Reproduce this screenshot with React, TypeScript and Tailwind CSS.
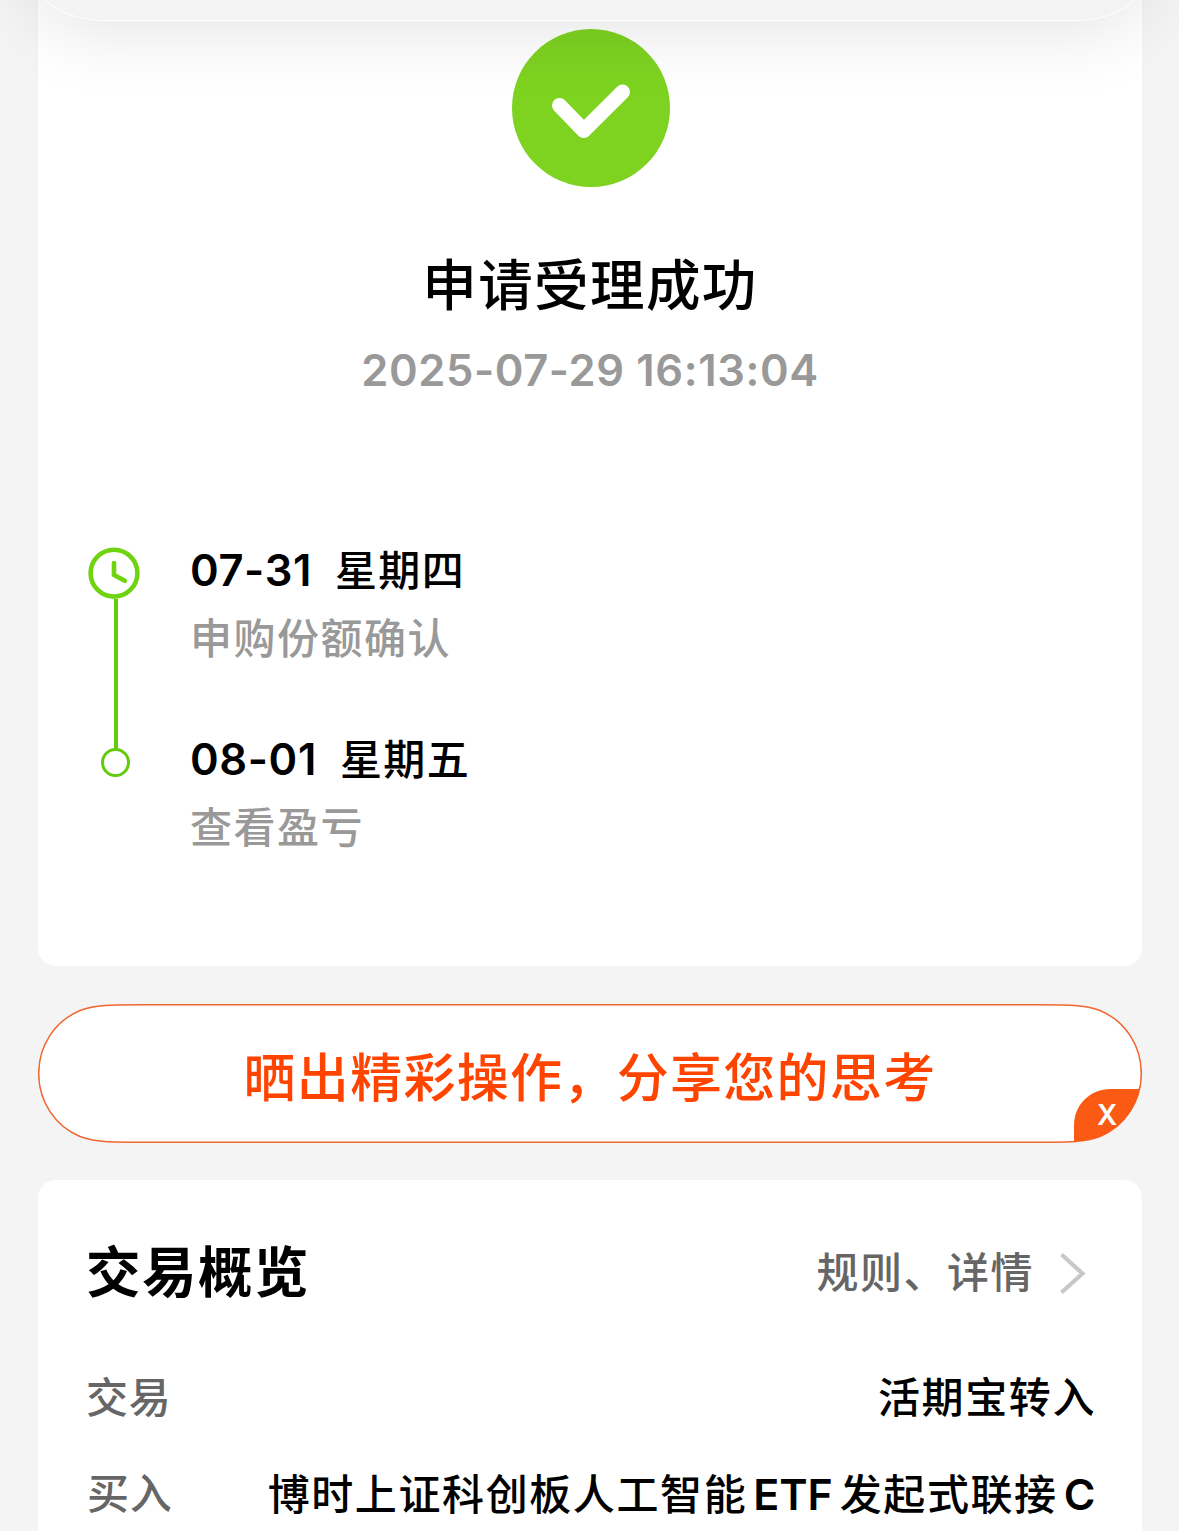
import React from "react";

const cjk = "font-['Inter','Noto_Sans_CJK_SC',sans-serif]";

const pillPath =
  "M102 .8 H1002 C1030 .8 1047 .8 1062 6.5 C1087.4 17.1 1103.3 41.9 1103.3 69.5 C1103.3 97.1 1087.4 121.9 1062 132.5 C1047 138.2 1030 138.2 1002 138.2 H102 C74 138.2 57 138.2 42 132.5 C16.6 121.9 .7 97.1 .7 69.5 C.7 41.9 16.6 17.1 42 6.5 C57 .8 74 .8 102 .8Z";

function SuccessIcon() {
  return (
    <svg width="158" height="158" viewBox="0 0 158 158" className="ml-[2px] block shrink-0">
      <circle cx="79" cy="79" r="79" fill="#7ed321" />
      <path d="M47.5 76.5 L71.8 101.5 L110.5 63" fill="none" stroke="#fff" strokeWidth="15" strokeLinecap="round" strokeLinejoin="round" />
    </svg>
  );
}

function ClockIcon() {
  return (
    <svg width="52" height="52" viewBox="0 0 52 52" className="-ml-[2px] block shrink-0">
      <circle cx="26" cy="26.2" r="23.4" fill="#fff" stroke="#6fd30f" strokeWidth="4.6" />
      <path d="M26 16 V28 L36.8 33.8" fill="none" stroke="#6fd30f" strokeWidth="4.6" strokeLinecap="round" strokeLinejoin="round" />
    </svg>
  );
}

function Step({ date, day, note }: { date: string; day: string; note: string }) {
  return (
    <div className="h-[189px]">
      <div className="flex h-[68px] items-center text-[42px] font-medium leading-[68px] tracking-[1.4px] text-black">
        <span className="text-[43.5px] font-semibold tracking-[0.6px]">{date}</span>
        <span className="ml-[23px] mt-[2px]">{day}</span>
      </div>
      <div className="mt-[1px] h-[67px] text-[42px] font-medium leading-[68px] tracking-[1.5px] text-[#999]">{note}</div>
    </div>
  );
}

function ShareBanner() {
  return (
    <div className="relative mt-[38px] flex h-[139px] items-center justify-center pt-[11px]">
      <svg width="1104" height="139" viewBox="0 0 1104 139" className="absolute inset-0">
        <defs>
          <clipPath id="pill">
            <path d={pillPath} />
          </clipPath>
        </defs>
        <path d={pillPath} fill="#fff" stroke="#f0662f" strokeWidth="1.5" />
        <path clipPath="url(#pill)" d="M1036 139 V121 C1036 101 1052 85 1073 85 H1104 V139Z" fill="#fa5a14" />
      </svg>
      <span className="relative text-[52px] font-medium leading-[76px] tracking-[1.3px] text-[#ff4400]">晒出精彩操作，分享您的思考</span>
      <span className="absolute left-[1059px] top-[94px] font-['Inter'] text-[28px] font-semibold leading-[34px] text-white">X</span>
    </div>
  );
}

export default function App() {
  return (
    <div className={`relative h-[1531px] w-[1179px] overflow-hidden bg-[#f4f4f4] pl-[38px] pr-[37px] ${cjk}`}>
      <section className="flex h-[966px] flex-col items-center rounded-b-[18px] bg-white pt-[29px]">
        <SuccessIcon />
        <h1 className="mt-[58px] h-[80px] text-[54.5px] font-medium leading-[80px] tracking-[1.4px] text-black">申请受理成功</h1>
        <p className="mt-[15px] h-[60px] text-[43.5px] font-semibold leading-[60px] tracking-[0.6px] text-[#999]">2025-07-29 16:13:04</p>
        <div className="mt-[136px] flex w-full pl-[51px]">
          <div className="flex w-[52px] flex-col items-center pt-[11px]">
            <ClockIcon />
            <div className="ml-[2px] h-[149px] w-[4px] bg-[#62cb0b]" />
            <div className="ml-px size-[29px] rounded-full border-[3px] border-[#62cb0b] bg-white" />
          </div>
          <div className="ml-[49px]">
            <Step date="07-31" day="星期四" note="申购份额确认" />
            <Step date="08-01" day="星期五" note="查看盈亏" />
          </div>
        </div>
      </section>

      <ShareBanner />

      <section className="mt-[37px] h-[370px] rounded-t-[18px] bg-white pl-[48px] pr-[46px] pt-[52px]">
        <div className="flex h-[80px] items-center justify-between">
          <h2 className="-mt-px text-[54.5px] font-bold leading-[80px] tracking-[1.5px] text-black">交易概览</h2>
          <div className="mt-px flex items-center text-[42px] font-medium leading-[64px] tracking-[1.5px] text-[#666]">
            规则、详情
            <svg width="30" height="44" viewBox="0 0 30 44" className="ml-[24px] mr-[8px] mt-[2px]">
              <path d="M3.5 2.5 L24.5 21.5 L3.5 40.5" fill="none" stroke="#c8c8c8" strokeWidth="4.2" />
            </svg>
          </div>
        </div>
        <div className="mt-[54px] flex h-[64px] justify-between text-[42px] font-medium leading-[64px] tracking-[1.6px]">
          <span className="tracking-[0.8px] text-[#666]">交易</span>
          <span className="text-black">活期宝转入</span>
        </div>
        <div className="mt-[32px] flex h-[64px] justify-between whitespace-nowrap text-[42px] font-medium leading-[64px] tracking-[1.6px]">
          <span className="ml-px tracking-[0.8px] text-[#666]">买入</span>
          <span className="-mr-[1px] text-black">博时上证科创板人工智能<span className="ml-[6px] mr-[7px] text-[43px] font-semibold tracking-[-0.1px]">ETF</span>发起式联接<span className="ml-[6px] text-[43px] font-semibold">C</span></span>
        </div>
      </section>

      <div className="absolute left-[34px] top-[-180px] h-[201px] w-[1112px] rounded-[70px/45px] border border-white bg-[#f3f3f3] shadow-[0_10px_74px_rgba(0,0,0,0.11)]" />
    </div>
  );
}
